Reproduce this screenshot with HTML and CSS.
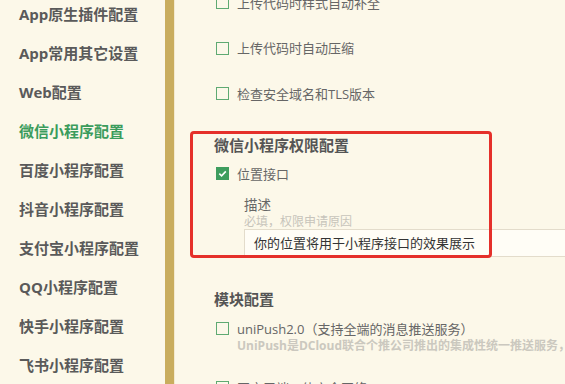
FILE: index.html
```html
<!DOCTYPE html>
<html lang="zh-CN">
<head>
<meta charset="utf-8">
<link rel="stylesheet" href="styles.css">
</head>
<body>
<div class="page">
  <nav class="sidebar">
    <ul class="nav-list">
      <li class="nav-item">App原生插件配置</li>
      <li class="nav-item">App常用其它设置</li>
      <li class="nav-item">Web配置</li>
      <li class="nav-item active">微信小程序配置</li>
      <li class="nav-item">百度小程序配置</li>
      <li class="nav-item">抖音小程序配置</li>
      <li class="nav-item">支付宝小程序配置</li>
      <li class="nav-item">QQ小程序配置</li>
      <li class="nav-item">快手小程序配置</li>
      <li class="nav-item">飞书小程序配置</li>
    </ul>
  </nav>
  <div class="divider"></div>
  <main class="main">
    <div class="opts">
      <label class="opt"><span class="box"></span><span>上传代码时样式自动补全</span></label>
      <label class="opt"><span class="box"></span><span>上传代码时自动压缩</span></label>
      <label class="opt"><span class="box"></span><span>检查安全域名和TLS版本</span></label>
    </div>

    <section class="perm">
      <h3 class="sec-title">微信小程序权限配置</h3>
      <label class="check-row"><span class="box checked"><svg viewBox="0 0 13 13" width="13" height="13"><path d="M3.3 6.6 L5.6 8.8 L9.8 4.4" fill="none" stroke="#fff" stroke-width="1.6"/></svg></span><span>位置接口</span></label>
      <div class="field">
        <div class="field-label">描述</div>
        <div class="field-hint">必填，权限申请原因</div>
        <div class="input">你的位置将用于小程序接口的效果展示</div>
      </div>
    </section>

    <section class="module">
      <h3 class="sec-title">模块配置</h3>
      <label class="mod-row"><span class="box"></span><span>uniPush2.0（支持全端的消息推送服务）</span></label>
      <div class="mod-desc">UniPush是DCloud联合个推公司推出的集成性统一推送服务，</div>
      <label class="mod-row next"><span class="box"></span><span>开启三端一体安全网络</span></label>
    </section>
  </main>
  <div class="annot"></div>
</div>
</body>
</html>
```
FILE: styles.css
```css
* { box-sizing: border-box; }
html, body {
  margin: 0;
  padding: 0;
  height: 100%;
  overflow: hidden;
  background: #fcf8e9;
}
body {
  font-family: "Open Sans", "Noto Sans CJK SC", sans-serif;
  color: #666;
}
.page {
  position: relative;
  display: flex;
  height: 384px;
  overflow: hidden;
}
.sidebar {
  width: 165px;
  flex: none;
}
.nav-list {
  list-style: none;
  margin: -5px 0 0 0;
  padding: 0;
}
.nav-item {
  height: 39px;
  line-height: 39px;
  padding-left: 19px;
  font-size: 15px;
  font-weight: 700;
  color: #5a5a5a;
  white-space: nowrap;
}
.nav-item.active {
  color: #3b9c5c;
}
.divider {
  width: 10px;
  flex: none;
  background: #c9ad5e;
  border-right: 1px solid #f3ead0;
}
.main {
  flex: 1;
  padding-left: 41px;
  min-width: 0;
}
.opts {
  margin-top: -20px;
}
.opt, .check-row, .mod-row {
  display: flex;
  align-items: center;
  gap: 8px;
  font-size: 13px;
  line-height: 18px;
  color: #666;
  white-space: nowrap;
}
.opt {
  height: 45.5px;
}
.box {
  width: 13px;
  height: 13px;
  border: 1px solid #5faa72;
  flex: none;
  display: flex;
  align-items: center;
  justify-content: center;
  background: transparent;
}
.box.checked {
  background: #3e9d5e;
  border: 0;
}
.box svg { display: block; }
.perm {
  margin-top: 18px;
}
.sec-title {
  margin: 0 0 0 -2px;
  font-size: 15px;
  line-height: 20px;
  font-weight: 700;
  color: #555;
}
.check-row {
  height: 20px;
  margin-top: 9px;
}
.field {
  padding-left: 28px;
}
.field-label {
  margin-top: 12px;
  font-size: 13.5px;
  line-height: 18px;
  color: #666;
}
.field-hint {
  font-size: 12px;
  line-height: 16px;
  color: #c7c4bb;
}
.input {
  height: 28px;
  margin-top: -1px;
  margin-right: -20px;
  border: 1px solid #e3dccb;
  background: #fffdf6;
  padding-left: 9px;
  line-height: 26px;
  font-size: 13px;
  color: #333;
  white-space: nowrap;
}
.module {
  margin-top: 32px;
}
.mod-row {
  height: 18px;
  margin-top: 11px;
}
.mod-desc {
  padding-left: 21px;
  font-size: 12px;
  line-height: 15px;
  font-weight: 700;
  color: #cbc8bf;
  white-space: nowrap;
}
.mod-row.next {
  margin-top: 26px;
}
.annot {
  position: absolute;
  left: 190px;
  top: 131px;
  width: 302px;
  height: 127px;
  border: 3px solid #e5302a;
  border-radius: 4px;
  pointer-events: none;
}
```
